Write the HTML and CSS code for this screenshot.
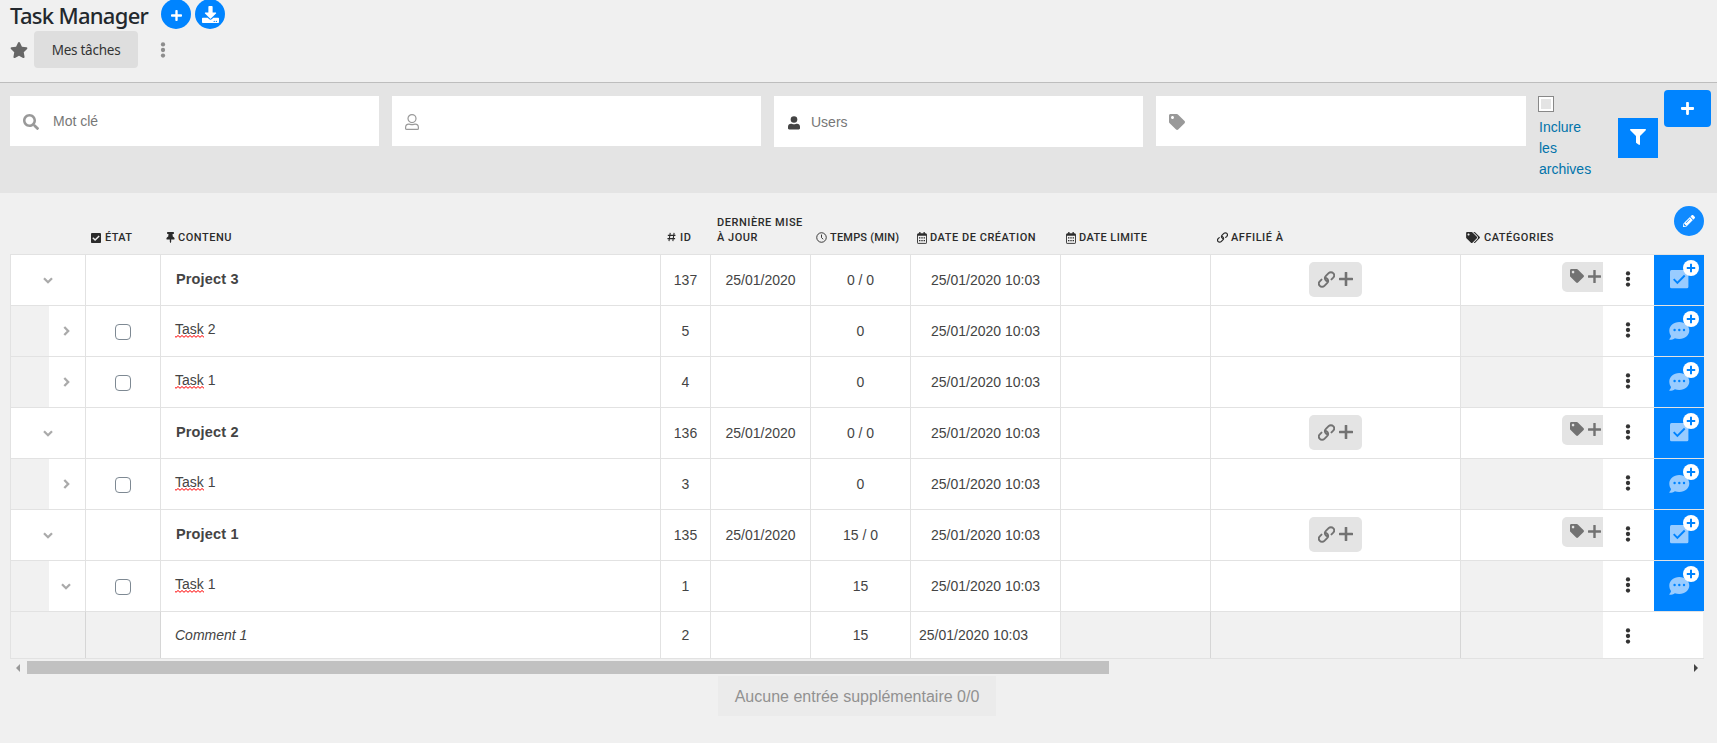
FILE: index.html
```html
<!DOCTYPE html>
<html lang="fr">
<head>
<meta charset="utf-8">
<title>Task Manager</title>
<link rel="stylesheet" href="styles.css">
</head>
<body>
<svg class="sprite" aria-hidden="true">
  <symbol id="plus" viewBox="0 0 448 512"><path d="M416 208H272V64c0-17.67-14.33-32-32-32h-32c-17.67 0-32 14.33-32 32v144H32c-17.67 0-32 14.33-32 32v32c0 17.67 14.33 32 32 32h144v144c0 17.67 14.33 32 32 32h32c17.67 0 32-14.33 32-32V304h144c17.67 0 32-14.33 32-32v-32c0-17.67-14.33-32-32-32z"/></symbol>
  <symbol id="plus-thin" viewBox="0 0 14 14"><path d="M7 .8v12.400M.8 7h12.400" fill="none" stroke="currentColor" stroke-width="2.600" stroke-linecap="round"/></symbol>
  <symbol id="download" viewBox="0 0 512 512"><path d="M216 0h80c13.3 0 24 10.7 24 24v168h87.7c17.8 0 26.7 21.5 14.1 34.1L269.7 378.3c-7.5 7.5-19.8 7.5-27.3 0L90.1 226.1c-12.6-12.6-3.7-34.1 14.1-34.1H192V24c0-13.3 10.7-24 24-24zm296 376v112c0 13.3-10.7 24-24 24H24c-13.3 0-24-10.7-24-24V376c0-13.3 10.7-24 24-24h146.7l49 49c20.1 20.1 52.5 20.1 72.6 0l49-49H488c13.3 0 24 10.7 24 24zm-124 88c0-11-9-20-20-20s-20 9-20 20 9 20 20 20 20-9 20-20zm64 0c0-11-9-20-20-20s-20 9-20 20 9 20 20 20 20-9 20-20z"/></symbol>
  <symbol id="star" viewBox="0 0 576 512"><path d="M259.3 17.8L194 150.2 47.9 171.5c-26.2 3.8-36.7 36.1-17.7 54.6l105.7 103-25 145.5c-4.5 26.3 23.2 46 46.4 33.7L288 439.6l130.7 68.7c23.2 12.2 50.9-7.4 46.4-33.7l-25-145.5 105.7-103c19-18.5 8.5-50.8-17.7-54.6L382 150.2 316.7 17.8c-11.7-23.6-45.6-23.9-57.4 0z"/></symbol>
  <symbol id="dots" viewBox="0 0 6 16"><circle cx="3" cy="2.4" r="2.15"/><circle cx="3" cy="8" r="2.15"/><circle cx="3" cy="13.6" r="2.15"/></symbol>
  <symbol id="search" viewBox="0 0 512 512"><path d="M505 442.7L405.3 343c-4.5-4.5-10.6-7-17-7H372c27.6-35.3 44-79.7 44-128C416 93.1 322.9 0 208 0S0 93.1 0 208s93.1 208 208 208c48.3 0 92.7-16.4 128-44v16.3c0 6.4 2.5 12.5 7 17l99.7 99.7c9.4 9.4 24.6 9.4 33.9 0l28.3-28.3c9.4-9.4 9.4-24.6.1-34zM208 336c-70.7 0-128-57.2-128-128 0-70.7 57.2-128 128-128 70.7 0 128 57.2 128 128 0 70.7-57.2 128-128 128z"/></symbol>
  <symbol id="user-line" viewBox="0 0 14 16"><g fill="none" stroke="currentColor" stroke-width="1.2"><circle cx="7" cy="4.6" r="4"/><path d="M3.9 10.2c1 0 1.600.5 3.100.5s2.100-.5 3.100-.5c2 0 3.300 1.400 3.300 3.200v1c0 .6-.4 1-1 1H1.600c-.6 0-1-.4-1-1v-1c0-1.800 1.300-3.200 3.300-3.200z"/></g></symbol>
  <symbol id="user" viewBox="0 0 12 14"><circle cx="6" cy="3.500" r="3.300"/><path d="M3 7.700c1 0 1.500.5 3 .5s2-.5 3-.5c1.800 0 3 1.300 3 3v1.600c0 .7-.5 1.200-1.200 1.200H1.200C.5 13.500 0 13 0 12.300v-1.600c0-1.700 1.200-3 3-3z"/></symbol>
  <symbol id="tag" viewBox="0 0 512 512"><path d="M0 252.118V48C0 21.490 21.490 0 48 0h204.118a48 48 0 0 1 33.941 14.059l211.882 211.882c18.745 18.745 18.745 49.137 0 67.882L293.823 497.941c-18.745 18.745-49.137 18.745-67.882 0L14.059 286.059A48 48 0 0 1 0 252.118zM112 64c-26.510 0-48 21.490-48 48s21.490 48 48 48 48-21.490 48-48-21.490-48-48-48z"/></symbol>
  <symbol id="tags" viewBox="0 0 640 512"><path d="M497.941 225.941L286.059 14.059A48 48 0 0 0 252.118 0H48C21.490 0 0 21.490 0 48v204.118a48 48 0 0 0 14.059 33.941l211.882 211.882c18.744 18.745 49.136 18.746 67.882 0l204.118-204.118c18.745-18.745 18.745-49.137 0-67.882zM112 160c-26.510 0-48-21.490-48-48s21.490-48 48-48 48 21.490 48 48-21.490 48-48 48zm513.941 133.823L421.823 497.941c-18.745 18.745-49.137 18.745-67.882 0l-.36-.36L527.640 323.522c16.999-16.999 26.360-39.600 26.360-63.640s-9.362-46.641-26.360-63.640L331.397 0h48.721a48 48 0 0 1 33.941 14.059l211.882 211.882c18.745 18.745 18.745 49.137 0 67.882z"/></symbol>
  <symbol id="filter" viewBox="0 0 512 512"><path d="M487.976 0H24.028C2.710 0-8.047 25.866 7.058 40.971L192 225.941V432c0 7.831 3.821 15.170 10.237 19.662l80 55.980C298.020 518.690 320 507.493 320 487.980V225.941l184.947-184.970C520.021 25.896 509.338 0 487.976 0z"/></symbol>
  <symbol id="link" viewBox="0 0 17 17"><g fill="none" stroke="currentColor" stroke-width="1.900" stroke-linecap="round"><path d="M9.700 10.300c-.9-.2-1.700-.7-2.200-1.400-.9-1.300-.7-2.900.4-4l2.700-2.700c1.300-1.300 3.400-1.300 4.600 0 1.200 1.200 1.200 3.200 0 4.500l-1.700 1.700"/><path d="M7.300 6.700c.9.2 1.700.7 2.200 1.400.9 1.300.7 2.900-.4 4l-2.700 2.700c-1.300 1.300-3.400 1.300-4.600 0-1.200-1.200-1.200-3.200 0-4.500l1.700-1.700"/></g></symbol>
  <symbol id="check-square" viewBox="0 0 448 512"><path d="M400 480H48c-26.510 0-48-21.490-48-48V80c0-26.510 21.490-48 48-48h352c26.510 0 48 21.490 48 48v352c0 26.510-21.490 48-48 48zm-204.686-98.059l184-184c6.248-6.248 6.248-16.379 0-22.627l-22.627-22.627c-6.248-6.248-16.379-6.249-22.628 0L184 302.745l-70.059-70.059c-6.248-6.248-16.379-6.248-22.628 0l-22.627 22.627c-6.248 6.248-6.248 16.379 0 22.627l104 104c6.249 6.250 16.379 6.250 22.628.001z"/></symbol>
  <symbol id="pin" viewBox="0 0 384 512"><path d="M298.028 214.267L285.793 96H328c13.255 0 24-10.745 24-24V24c0-13.255-10.745-24-24-24H56C42.745 0 32 10.745 32 24v48c0 13.255 10.745 24 24 24h42.207L85.972 214.267C37.465 236.820 0 277.261 0 328c0 13.255 10.745 24 24 24h136v104.007c0 1.242.289 2.467.845 3.578l24 48c2.941 5.882 11.364 5.893 14.311 0l24-48a8.008 8.008 0 0 0 .845-3.578V352h136c13.255 0 24-10.745 24-24-.001-51.183-37.983-91.420-85.973-113.733z"/></symbol>
  <symbol id="pencil" viewBox="0 0 512 512"><path d="M497.900 142.100l-46.100 46.100c-4.700 4.700-12.300 4.700-17 0l-111-111c-4.700-4.700-4.700-12.300 0-17l46.100-46.100c18.700-18.700 49.100-18.700 67.900 0l60.100 60.100c18.800 18.700 18.800 49.100 0 67.900zM284.200 99.800L21.600 362.400.4 483.900c-2.900 16.400 11.400 30.600 27.800 27.800l121.500-21.300 262.600-262.600c4.700-4.700 4.700-12.300 0-17l-111-111c-4.800-4.700-12.400-4.700-17.100 0zM124.100 339.900c-5.500-5.500-5.500-14.300 0-19.800l154-154c5.500-5.500 14.300-5.500 19.800 0s5.500 14.300 0 19.800l-154 154c-5.500 5.500-14.300 5.500-19.800 0zM88 424h48v36.300l-64.500 11.300-31.100-31.100L51.700 376H88v48z"/></symbol>
  <symbol id="hash" viewBox="0 0 10 10"><path d="M3.600.5L2.200 9.500M7.900.5L6.500 9.500M.9 3.200h8.500M.5 6.800H9" fill="none" stroke="currentColor" stroke-width="1.200"/></symbol>
  <symbol id="clock" viewBox="0 0 12 12"><circle cx="6" cy="6" r="5.200" fill="none" stroke="currentColor"/><path d="M6 2.800v3.400l1.900 1.700" fill="none" stroke="currentColor"/></symbol>
  <symbol id="calendar" viewBox="0 0 10 12"><path d="M1.100 1.800h7.800c.4 0 .6.300.6.600v8.400c0 .4-.2.600-.6.600H1.100c-.4 0-.6-.2-.6-.6V2.400c0-.3.2-.6.6-.6z" fill="none" stroke="currentColor" stroke-width=".9"/><path d="M2.200 0h1.300v2H2.200zM6.500 0h1.300v2H6.500zM.5 1.800h9v2h-9zM2 5.200h1.400v1.300H2zM4.300 5.200h1.400v1.300H4.300zM6.600 5.200H8v1.300H6.600zM2 7.900h1.400v1.300H2zM4.300 7.900h1.400v1.300H4.300zM6.600 7.900H8v1.300H6.600z"/></symbol>
  <symbol id="down" viewBox="0 0 10 7"><path d="M1 1.300l4 3.900 4-3.900" fill="none" stroke="currentColor" stroke-width="2.300"/></symbol>
  <symbol id="right" viewBox="0 0 7 10"><path d="M1.300 1l3.900 4-3.900 4" fill="none" stroke="currentColor" stroke-width="2.300"/></symbol>
  <symbol id="add-task" viewBox="0 0 30 30"><rect x="1" y="11" width="18.400" height="18.300" rx="1.500" fill="#99ccff"/><path d="M4.700 20.200l3.700 3.700 7.300-7.400" fill="none" stroke="#0084ff" stroke-width="1.900"/><circle cx="22" cy="9" r="8" fill="#fff"/><path d="M22 4.800v8.400M17.800 9h8.400" stroke="#0084ff" stroke-width="2"/></symbol>
  <symbol id="add-comment" viewBox="0 0 30 30"><path d="M10.300 12c5.700 0 10 3.700 10 8.500S16 29 10.300 29c-1.600 0-3.100-.3-4.400-.8-1.500 1-3.300 1.600-5.300 1.600-.4 0-.5-.4-.3-.6.800-.9 1.500-2 1.700-3.300C.9 24.400.3 22.500.3 20.500c0-4.800 4.300-8.500 10-8.500z" fill="#99ccff"/><circle cx="5.600" cy="20" r="1.200" fill="#0084ff"/><circle cx="10.300" cy="20" r="1.200" fill="#0084ff"/><circle cx="15" cy="20" r="1.200" fill="#0084ff"/><circle cx="22" cy="9" r="8" fill="#fff"/><path d="M22 4.800v8.400M17.800 9h8.400" stroke="#0084ff" stroke-width="2"/></symbol>
</svg>

<header class="top">
  <div class="title-row">
    <h1 class="title">Task Manager</h1>
    <button class="round"><svg class="i-plus"><use href="#plus"/></svg></button>
    <button class="round"><svg class="i-download"><use href="#download"/></svg></button>
  </div>
  <div class="nav-row">
    <svg class="i-star"><use href="#star"/></svg>
    <span class="tab">Mes tâches</span>
    <svg class="i-more"><use href="#dots"/></svg>
  </div>
</header>

<section class="filters">
  <div class="field"><svg class="i-search"><use href="#search"/></svg><span>Mot clé</span></div>
  <div class="field field-user"><svg class="i-user-line"><use href="#user-line"/></svg></div>
  <div class="field field-users"><svg class="i-user"><use href="#user"/></svg><span>Users</span></div>
  <div class="field field-tag"><svg class="i-tag"><use href="#tag"/></svg></div>
  <label class="archives"><span class="archive-box"></span>Inclure les archives</label>
  <button class="filter-btn"><svg class="i-filter"><use href="#filter"/></svg></button>
  <button class="add-btn"><svg class="i-add"><use href="#plus"/></svg></button>
</section>

<main class="board">
  <div class="grid head">
    <div></div>
    <div class="th th-state"><svg class="h-check"><use href="#check-square"/></svg><span>ÉTAT</span></div>
    <div class="th th-content"><svg class="h-pin"><use href="#pin"/></svg><span>CONTENU</span></div>
    <div class="th"><svg class="h-hash"><use href="#hash"/></svg><span>ID</span></div>
    <div class="th"><span>DERNIÈRE MISE<br>À JOUR</span></div>
    <div class="th th-time"><svg class="h-clock"><use href="#clock"/></svg><span>TEMPS (MIN)</span></div>
    <div class="th"><svg class="h-cal"><use href="#calendar"/></svg><span>DATE DE CRÉATION</span></div>
    <div class="th th-limit"><svg class="h-cal"><use href="#calendar"/></svg><span>DATE LIMITE</span></div>
    <div class="th"><svg class="h-link"><use href="#link"/></svg><span>AFFILIÉ À</span></div>
    <div class="th th-cats"><svg class="h-tags"><use href="#tags"/></svg><span>CATÉGORIES</span></div>
    <div></div>
    <div class="edit"><button class="round"><svg class="i-pencil"><use href="#pencil"/></svg></button></div>
  </div>
  <div id="rows"></div>
  <div class="scroll"><span class="arrow-left"></span><span class="thumb"></span><span class="arrow-right"></span></div>
  <button class="load-more">Aucune entrée supplémentaire 0/0</button>
</main>
<script src="rows.js"></script>
</body>
</html>
```
FILE: rows.js
```javascript
const rows = [
  { type: 'project', name: 'Project 3', id: 137, updated: '25/01/2020', time: '0 / 0' },
  { type: 'task', name: '2', id: 5, time: '0' },
  { type: 'task', name: '1', id: 4, time: '0' },
  { type: 'project', name: 'Project 2', id: 136, updated: '25/01/2020', time: '0 / 0' },
  { type: 'task', name: '1', id: 3, time: '0' },
  { type: 'project', name: 'Project 1', id: 135, updated: '25/01/2020', time: '15 / 0' },
  { type: 'task', name: '1', id: 1, time: '15', open: true },
  { type: 'comment', name: 'Comment 1', id: 2, time: '15' }
];

const icon = (id, cls) => `<svg class="${cls}"><use href="#${id}"/></svg>`;

function renderRow(r) {
  const project = r.type === 'project';
  const task = r.type === 'task';
  const comment = r.type === 'comment';
  const chevron = project || r.open ? icon('down', 'c-down') : icon('right', 'c-right');
  const name = task ? `<span><span class="spell">Task</span> ${r.name}</span>` : r.name;
  return `<div class="grid row ${r.type}">
    <div class="cell toggle">${comment ? '' : chevron}</div>
    <div class="cell state">${task ? '<span class="box"></span>' : ''}</div>
    <div class="cell name">${name}</div>
    <div class="cell">${r.id}</div>
    <div class="cell">${r.updated || ''}</div>
    <div class="cell">${r.time}</div>
    <div class="cell date">25/01/2020 10:03</div>
    <div class="cell limit"></div>
    <div class="cell parent">${project ? `<span class="chip">${icon('link', 'k-link')}${icon('plus-thin', 'k-plus')}</span>` : ''}</div>
    <div class="cell cats">${project ? `<span class="chip chip-tag">${icon('tag', 'k-tag')}${icon('plus-thin', 'k-plus-s')}</span>` : ''}</div>
    <div class="cell menu">${icon('dots', 'k-dots')}</div>
    <div class="cell add">${comment ? '' : icon(project ? 'add-task' : 'add-comment', 'k-add')}</div>
  </div>`;
}

document.getElementById('rows').innerHTML = rows.map(renderRow).join('');
```
FILE: styles.css
```css
* { box-sizing: border-box; }
body { margin: 0; background: #f0f0f0; color: #444; font: 14px/21px "Liberation Sans", Arial, sans-serif; overflow: hidden; }
svg { display: block; flex: none; fill: currentColor; }
.sprite { display: none; }
button { border: 0; padding: 0; margin: 0; font: inherit; background: #0084ff; color: #fff; display: flex; align-items: center; justify-content: center; flex: none; }

.top { height: 83px; border-bottom: 1px solid #bdbdbd; padding-left: 10px; }
.title-row { display: flex; height: 31px; align-items: flex-start; }
.title { margin: 0; width: 151px; font: 500 22px/30px "Noto Sans", sans-serif; letter-spacing: -0.7px; color: #23282d; white-space: nowrap; }
.round { width: 30px; height: 30px; border-radius: 50%; margin-right: 4px; }
.title-row .round { margin-top: -1px; }
.i-plus { width: 11px; height: 13px; margin-top: 3px; }
.i-download { width: 17px; height: 17px; }
.nav-row { display: flex; height: 37px; align-items: center; color: #666; }
.i-star { width: 18px; height: 16px; }
.tab { width: 104px; height: 37px; margin-left: 6px; border-radius: 4px; background: #dedede; color: #333; font: 13.5px/38px "Noto Sans", sans-serif; letter-spacing: -0.25px; text-align: center; white-space: nowrap; }
.i-more { width: 6px; height: 16px; margin-left: 22px; color: #8d8d8d; }

.filters { display: flex; height: 110px; align-items: flex-start; background: #e4e4e4; padding: 13px 0 0 10px; }
.field { display: flex; align-items: center; width: 369px; height: 50px; margin-right: 13px; padding-left: 13px; background: #fff; color: #777; flex: none; }
.i-search { width: 16px; height: 16px; color: #999; margin: 2px 14px 0 0; }
.i-user-line { width: 14px; height: 16px; color: #999; margin-top: 2px; }
.field-users { height: 51px; padding-left: 14px; }
.i-user { width: 12px; height: 14px; color: #444; margin: 2px 11px 0 0; }
.field-users span { margin-top: 2px; }
.field-tag { width: 370px; margin-left: 0; margin-right: 12px; }
.i-tag { width: 16px; height: 16px; color: #999; margin-top: 2px; }
.archives { width: 56px; margin-right: 24px; padding-left: 1px; color: #0073aa; flex: none; }
.archive-box { display: block; width: 16px; height: 16px; margin: 0 0 5px -1px; border: 1px solid #888; background: #e4e4e4; box-shadow: inset 0 0 0 2px #fff; }
.filter-btn { width: 40px; height: 40px; margin-top: 22px; }
.i-filter { width: 16px; height: 16px; margin-top: -2px; }
.add-btn { width: 47px; height: 37px; margin: -6px 0 0 6px; border-radius: 4px; }
.i-add { width: 13px; height: 15px; margin-top: -1px; }

.board { width: 1694px; margin-left: 10px; }
.grid { display: grid; grid-template-columns: 75px 75px 500px 50px 100px 100px 150px 150px 250px 143px 51px 50px; }
.head { height: 61px; color: #2b2b2b; font: 500 11px/15px Roboto, sans-serif; letter-spacing: 0.53px; }
.th { display: flex; align-items: flex-end; padding: 0 0 9px 7px; white-space: nowrap; }
.th-state { padding-left: 6px; letter-spacing: 0.35px; }
.th-content { padding-left: 6px; }
.th-time { padding-left: 6px; letter-spacing: 0.2px; }
.th-limit { padding-left: 6px; letter-spacing: 0.4px; }
.th-cats { padding-left: 6px; }
.h-check { width: 10px; height: 12px; margin: 0 4px 1px 0; }
.h-pin { width: 9px; height: 11px; margin: 0 3px 2px 0; }
.h-hash { width: 9px; height: 10px; margin: 0 4px 3px 0; }
.h-clock { width: 11px; height: 11px; margin: 0 3px 2px 0; }
.h-cal { width: 10px; height: 12px; margin: 0 3px 1px 0; }
.h-link { width: 11px; height: 11px; margin: 0 3px 2px 0; }
.h-tags { width: 14px; height: 11px; margin: 0 4px 2px 0; }
.edit { padding: 13px 0 0 20px; }
.edit .round { background: #0f8aff; margin: 0; }
.i-pencil { width: 12px; height: 12px; }

.row { height: 51px; }
.cell { display: flex; justify-content: center; border: 0 solid #e2e2e2; border-width: 1px 0 0 1px; background: #fff; padding-top: 15px; white-space: nowrap; }
.toggle { color: #aaa; padding: 22px 0 0 0; }
.c-down { width: 10px; height: 7px; }
.task .toggle { padding: 20px 0 0 36px; border-right: 0; background: linear-gradient(to right, #f1f1f1 38px, #fff 38px); }
.c-right { width: 7px; height: 10px; }
.task .c-down { margin-top: 2px; }
.state { padding-top: 18px; }
.box { width: 16px; height: 16px; border: 1px solid #7e8993; border-radius: 4px; }
.name { justify-content: flex-start; padding: 13px 0 0 14px; }
.project .name { padding: 14px 0 0 15px; font-weight: bold; font-size: 14.5px; letter-spacing: 0.15px; }
.spell { padding-bottom: 1px; background: url("data:image/svg+xml,%3Csvg xmlns='http://www.w3.org/2000/svg' width='4' height='3'%3E%3Cpath d='M-1 .5L1 2.300L3 .5L5 2.300' fill='none' stroke='%23f00' stroke-width='1'/%3E%3C/svg%3E") repeat-x left bottom; }
.parent { padding-top: 7px; }
.chip { display: flex; width: 53px; height: 35px; padding: 9px 0 0 9px; border-radius: 5px; background: #e4e4e4; color: #727272; }
.k-link { width: 17px; height: 17px; margin-right: 4px; }
.k-plus { width: 14px; height: 14px; margin-top: 1px; }
.cats { justify-content: flex-end; padding-top: 7px; }
.chip-tag { width: 41px; height: 30px; padding: 7px 0 0 8px; border-radius: 5px 0 0 5px; }
.k-tag { width: 14px; height: 14px; margin-right: 4px; }
.k-plus-s { width: 13px; height: 13px; margin-top: 1px; }
.task .cats { background: #f1f1f1; }
.menu { border-left: 0; color: #333; padding: 16px 2px 0 0; }
.k-dots { width: 6px; height: 16px; }
.add { border-left: 0; background: #0084ff; padding: 4px 0 0 15px; justify-content: flex-start; }
.k-add { width: 30px; height: 30px; }

.comment { height: 48px; border-bottom: 1px solid #e2e2e2; }
.comment .cell { padding-top: 13px; }
.comment .name { font-style: italic; }
.comment .date { justify-content: flex-start; padding-left: 8px; }
.comment .toggle, .comment .state, .comment .limit, .comment .parent, .comment .cats { background: #f1f1f1; }
.comment .state, .comment .name, .comment .parent, .comment .cats { border-left-color: #d6d6d6; }
.comment .menu { padding-top: 16px; }
.comment .add { background: #fff; margin-right: 1px; }

.scroll { display: flex; height: 17px; align-items: center; padding-left: 6px; }
.arrow-left { border: 4px solid transparent; border-right-color: #999; border-left: 0; }
.thumb { width: 1082px; height: 13px; margin-left: 7px; background: #c1c1c1; }
.arrow-right { margin-left: auto; margin-right: 6px; border: 4px solid transparent; border-left-color: #444; border-right: 0; }
.load-more { width: 278px; height: 40px; margin-left: 708px; background: #ebebeb; color: #919191; font-size: 16px; white-space: nowrap; }
```
